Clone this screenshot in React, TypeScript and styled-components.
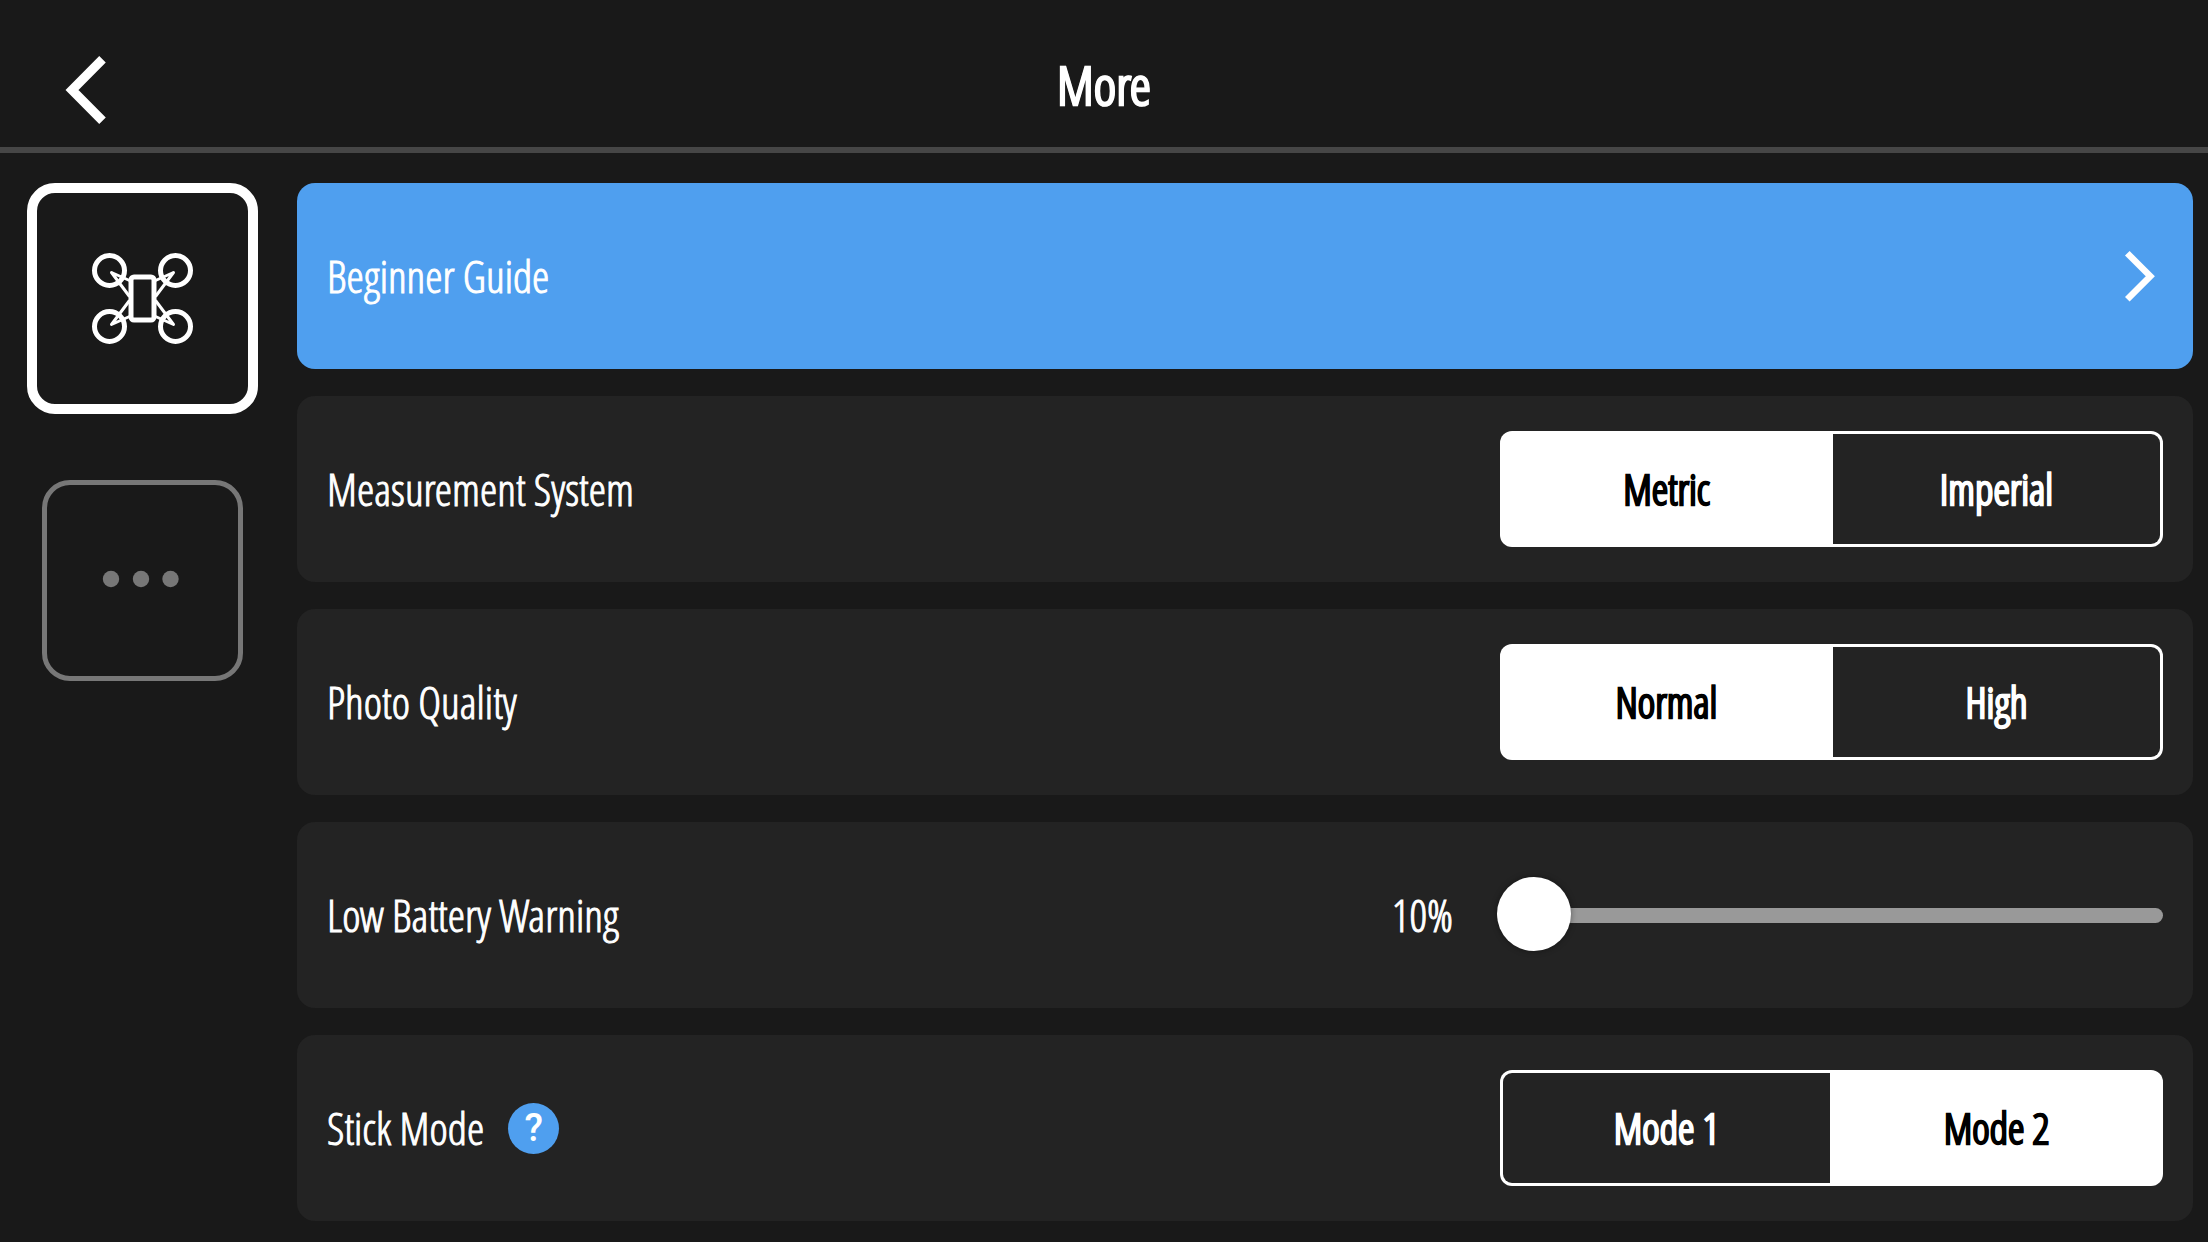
import React, { useState } from "react";
import styled, { createGlobalStyle } from "styled-components";

const color = {
  page: "#191919",
  card: "#232323",
  accent: "#4f9fef",
  rule: "#464646",
  muted: "#777777",
  track: "#999999",
};

const GlobalStyle = createGlobalStyle`
  *, *::before, *::after { box-sizing: border-box; }
  body {
    margin: 0;
    background: ${color.page};
    color: #fff;
    font-family: "Open Sans Condensed Light", "Roboto Condensed", "Liberation Sans", sans-serif;
    font-size: 44px;
    line-height: 50px;
    -webkit-text-stroke: 1px currentColor;
  }
  button, input { font: inherit; color: inherit; margin: 0; }
`;

const Header = styled.header`
  display: grid;
  grid-template-columns: 1fr auto 1fr;
  align-items: center;
  height: 153px;
  padding: 20px 54px 0;
  border-bottom: 6px solid ${color.rule};
`;

const PlainButton = styled.button`
  display: flex;
  align-items: center;
  justify-content: center;
  padding: 0;
  border: 0;
  background: none;
  cursor: pointer;
`;

const BackButton = styled(PlainButton)`
  width: 64px;
  padding-top: 13px;
`;

const Title = styled.h1`
  margin: 0;
  font-size: 54px;
  line-height: 60px;
  font-weight: 700;
`;

const Layout = styled.div`
  display: grid;
  grid-template-columns: 231px minmax(0, 1fr);
  gap: 39px;
  padding: 30px 15px 21px 27px;
`;

const Sidebar = styled.nav`
  display: flex;
  flex-direction: column;
  align-items: center;
  gap: 66px;
`;

const TabButton = styled(PlainButton)<{ $active: boolean }>`
  width: ${(p) => (p.$active ? 231 : 201)}px;
  height: ${(p) => (p.$active ? 231 : 201)}px;
  border: ${(p) => (p.$active ? "10px solid #fff" : `5px solid ${color.muted}`)};
  border-radius: 28px;
  color: ${(p) => (p.$active ? "#fff" : color.muted)};
`;

const Settings = styled.main`
  display: flex;
  flex-direction: column;
  gap: 27px;
`;

const Row = styled.section`
  display: flex;
  align-items: center;
  justify-content: space-between;
  height: 186px;
  padding: 0 30px;
  border-radius: 18px;
  background: ${color.card};
`;

const GuideRow = styled(Row).attrs({ as: "button" })`
  width: 100%;
  border: 0;
  background: ${color.accent};
  text-align: left;
  cursor: pointer;
`;

const RowLabel = styled.span`
  display: flex;
  align-items: center;
  gap: 24px;
`;

const Segments = styled.div`
  display: grid;
  grid-template-columns: 1fr 1fr;
  gap: 3px;
  width: 663px;
  height: 116px;
  padding: 3px;
  border-radius: 12px;
  background: #fff;
`;

const Segment = styled.label<{ $selected: boolean }>`
  display: flex;
  align-items: center;
  justify-content: center;
  background: ${(p) => (p.$selected ? "#fff" : color.card)};
  color: ${(p) => (p.$selected ? "#000" : "#fff")};
  font-size: 42px;
  font-weight: 700;
  -webkit-text-stroke: 1px currentColor;
  cursor: pointer;
  &:first-child { border-radius: 9px 0 0 9px; }
  &:last-child { border-radius: 0 9px 9px 0; }
`;

const HiddenRadio = styled.input`
  position: absolute;
  width: 1px;
  height: 1px;
  opacity: 0;
`;

const HelpButton = styled(PlainButton)`
  width: 51px;
  height: 51px;
  border-radius: 50%;
  background: ${color.accent};
  font-family: Roboto, sans-serif;
  font-size: 38px;
  font-weight: 500;
  -webkit-text-stroke: 0;
`;

const SliderGroup = styled.div`
  display: flex;
  align-items: center;
  gap: 44px;
`;

const Slider = styled.input`
  width: 666px;
  height: 75px;
  appearance: none;
  background: none;
  cursor: pointer;
  &::-webkit-slider-runnable-track {
    height: 15px;
    border-radius: 8px;
    background: ${color.track};
  }
  &::-webkit-slider-thumb {
    appearance: none;
    width: 74px;
    height: 74px;
    margin-top: -31px;
    border-radius: 50%;
    background: #fff;
    box-shadow: 0 0 6px rgba(0, 0, 0, 0.4);
  }
`;

const BackIcon = () => (
  <svg width="64" height="72" viewBox="0 0 64 72" fill="none" stroke="currentColor" strokeWidth="9.2" aria-hidden="true">
    <path d="M48.5 5.3 18 36l30.5 30.7" />
  </svg>
);

const ForwardIcon = () => (
  <svg width="48" height="60" viewBox="0 0 48 60" fill="none" stroke="currentColor" strokeWidth="6.5" aria-hidden="true">
    <path d="M12.3 7.3l23 23-23 23" />
  </svg>
);

const corners = [
  [-1, -1],
  [1, -1],
  [-1, 1],
  [1, 1],
];

const DroneIcon = () => (
  <svg width="103" height="93" viewBox="-51.5 -46.5 103 93" fill="none" stroke="currentColor" aria-hidden="true">
    {corners.map(([x, y]) => (
      <g key={`${x}${y}`}>
        <circle cx={33 * x} cy={28 * y} r="15" strokeWidth="5" />
        <path
          d={`M${13 * x} ${18 * y}L${31 * x} ${26 * y}L${13 * x} ${2 * y}`}
          strokeWidth="3"
          strokeLinejoin="round"
        />
      </g>
    ))}
    <rect x="-11.5" y="-21.5" width="23" height="43" rx="3" strokeWidth="5" />
  </svg>
);

const DotsIcon = () => (
  <svg width="101" height="41" viewBox="-50.5 -20.5 101 41" fill="currentColor" aria-hidden="true">
    {[-31.5, -1.5, 28].map((cx) => (
      <circle key={cx} cx={cx} cy="-1.5" r="8.2" />
    ))}
  </svg>
);

function Choice({ name, label, options, initial, help }: {
  name: string;
  label: string;
  options: string[];
  initial: string;
  help?: boolean;
}) {
  const [value, setValue] = useState(initial);
  return (
    <Row>
      <RowLabel>
        <span id={`${name}-label`}>{label}</span>
        {help && <HelpButton type="button" aria-label={`${label} help`}>?</HelpButton>}
      </RowLabel>
      <Segments role="radiogroup" aria-labelledby={`${name}-label`}>
        {options.map((option) => (
          <Segment key={option} $selected={option === value}>
            <HiddenRadio
              type="radio"
              name={name}
              value={option}
              checked={option === value}
              onChange={() => setValue(option)}
            />
            {option}
          </Segment>
        ))}
      </Segments>
    </Row>
  );
}

export default function App() {
  const [tab, setTab] = useState("aircraft");
  const [battery, setBattery] = useState(10);
  return (
    <>
      <GlobalStyle />
      <Header>
        <BackButton type="button" aria-label="Back"><BackIcon /></BackButton>
        <Title>More</Title>
      </Header>
      <Layout>
        <Sidebar>
          <TabButton type="button" aria-label="Aircraft" $active={tab === "aircraft"} onClick={() => setTab("aircraft")}>
            <DroneIcon />
          </TabButton>
          <TabButton type="button" aria-label="Other" $active={tab === "other"} onClick={() => setTab("other")}>
            <DotsIcon />
          </TabButton>
        </Sidebar>
        <Settings>
          <GuideRow type="button">
            <span>Beginner Guide</span>
            <ForwardIcon />
          </GuideRow>
          <Choice name="units" label="Measurement System" options={["Metric", "Imperial"]} initial="Metric" />
          <Choice name="quality" label="Photo Quality" options={["Normal", "High"]} initial="Normal" />
          <Row>
            <label htmlFor="battery">Low Battery Warning</label>
            <SliderGroup>
              <output htmlFor="battery">{battery}%</output>
              <Slider
                id="battery"
                type="range"
                min={10}
                max={50}
                value={battery}
                onChange={(e) => setBattery(Number(e.target.value))}
              />
            </SliderGroup>
          </Row>
          <Choice name="stick" label="Stick Mode" options={["Mode 1", "Mode 2"]} initial="Mode 2" help />
        </Settings>
      </Layout>
    </>
  );
}
